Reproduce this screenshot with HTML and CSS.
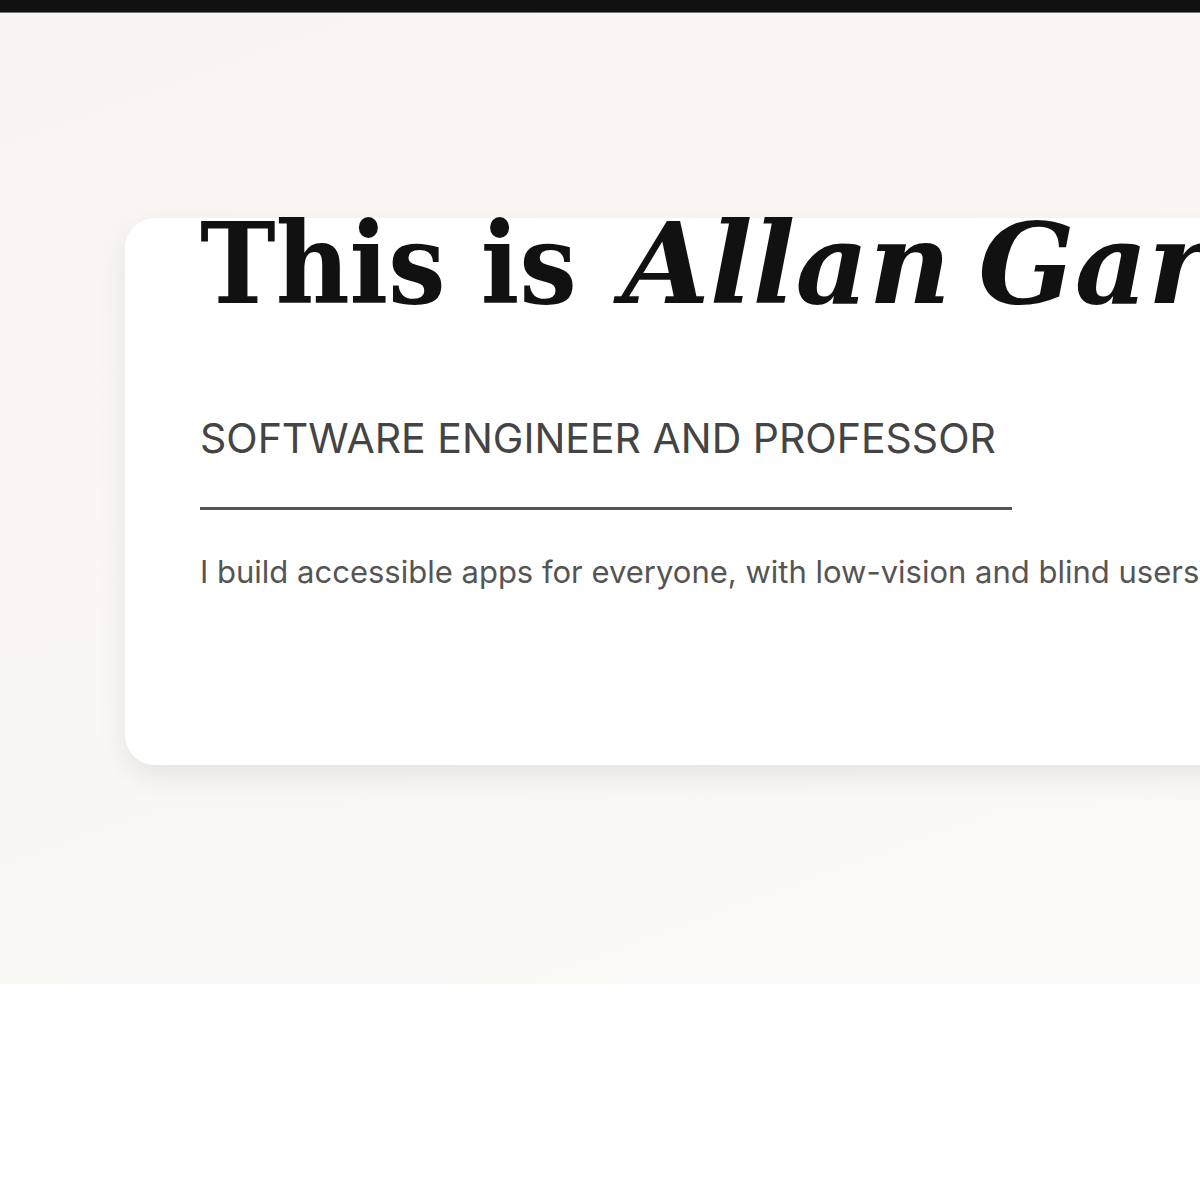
FILE: index.html
```html
<!DOCTYPE html>
<html lang="en">
<head>
<meta charset="utf-8">
<title>Allan</title>
<link rel="stylesheet" href="styles.css">
</head>
<body>
<div class="topbar"></div>
<main class="hero">
  <section class="card">
    <h1 class="title">This is <em class="name">Allan Garcia</em></h1>
    <p class="role">SOFTWARE ENGINEER AND PROFESSOR</p>
    <hr class="rule">
    <p class="lead">I build accessible apps for everyone, with low-vision and blind users in mind.</p>
  </section>
</main>
</body>
</html>
```
FILE: styles.css
```css
html, body { margin: 0; padding: 0; background: #fff; overflow: hidden; }
body { font-family: Inter, "Noto Sans", sans-serif; }
.topbar { height: 12px; background: #111; border-bottom: 1px solid #777; }
.hero {
  height: 971px;
  background: linear-gradient(160deg, #f8f4f1 0%, #fbfaf8 100%);
  padding-top: 205px;
  padding-left: 125px;
  box-sizing: border-box;
  overflow: hidden;
}
.card {
  width: 1300px;
  height: 547px;
  box-sizing: border-box;
  background: #fff;
  border-radius: 30px 0 0 30px;
  box-shadow: 0 12px 30px rgba(0,0,0,0.08);
  padding-left: 75px;
  white-space: nowrap;
}
.title {
  margin: 0;
  font-family: "DejaVu Serif", serif;
  font-stretch: condensed;
  font-weight: 700;
  font-size: 113px;
  line-height: 100px;
  color: #111;
  position: relative;
  top: -4px;
}
.name { font-style: italic; font-stretch: normal; margin-left: 10px; word-spacing: -12px; }
.role {
  margin: 95px 0 0;
  font-size: 41px;
  color: #444;
  font-weight: 400;
}
.rule {
  width: 812px;
  margin: 44px 0 0;
  border: 0;
  border-top: 3px solid #555;
}
.lead { margin: 43px 0 0; font-size: 31px; color: #555; }
```
